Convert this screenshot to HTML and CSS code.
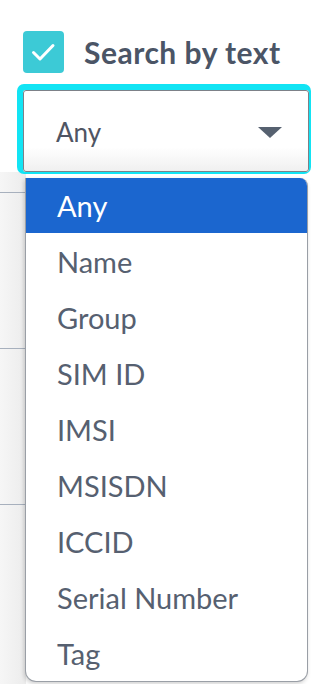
FILE: index.html
```html
<!DOCTYPE html>
<html lang="en">
<head>
    <meta charset="UTF-8">
    <meta name="viewport" content="width=device-width, initial-scale=1.0">
    <title>Search by text</title>
    <link rel="stylesheet" href="styles.css">
</head>
<body>
    <div class="filter">
        <label class="filter-head">
            <span class="checkbox">
                <svg viewBox="0 0 41 42" width="41" height="42"><path d="M10.5 21.5l6.5 6.5L30 14.5" fill="none" stroke="#fff" stroke-width="3" stroke-linecap="round" stroke-linejoin="round"/></svg>
            </span>
            <span class="filter-title">Search by text</span>
        </label>

        <div class="field">
            <div class="select">
                <span class="select-value">Any</span>
                <span class="caret"></span>
            </div>
            <ul class="menu">
                <li class="active">Any</li>
                <li>Name</li>
                <li>Group</li>
                <li>SIM ID</li>
                <li>IMSI</li>
                <li>MSISDN</li>
                <li>ICCID</li>
                <li>Serial Number</li>
                <li>Tag</li>
            </ul>
        </div>
    </div>

    <div class="table">
        <div class="row first"></div>
        <div class="row"></div>
        <div class="row"></div>
        <div class="row last"></div>
    </div>
</body>
</html>
```

FILE: styles.css
```css
body {
    font-family: "Lato", "Open Sans", sans-serif;
    background-color: #ffffff;
    margin: 0;
    padding: 0;
    min-height: 684px;
    color: #4a5263;
}

.filter {
    padding: 31px 12px 0 17px;
}

.filter-head {
    display: flex;
    align-items: center;
    gap: 20px;
    margin-left: 6px;
    height: 42px;
}

.checkbox {
    width: 41px;
    height: 42px;
    border-radius: 4px;
    background-color: #3ccad6;
    display: flex;
}

.filter-title {
    font-size: 30px;
    font-weight: 700;
    color: #4b5566;
    letter-spacing: 0.5px;
}

.field {
    position: relative;
    margin-top: 17px;
}

.select {
    display: flex;
    align-items: center;
    justify-content: space-between;
    height: 78px;
    margin: 6px 0 0 6px;
    padding: 2px 26px 0 32px;
    border: 1px solid #7d8188;
    border-radius: 3px;
    background: linear-gradient(#ffffff 70%, #f0f0f0);
    box-shadow: -2px -2px 0 4px #12e4f4;
    font-size: 26px;
}

.select-value {
    color: #4f5563;
}

.caret {
    width: 0;
    height: 0;
    border-left: 12px solid transparent;
    border-right: 12px solid transparent;
    border-top: 11px solid #566170;
}

.menu {
    position: absolute;
    top: 88px;
    left: 8px;
    right: 1px;
    margin: 0;
    padding: 0;
    list-style: none;
    background: #ffffff;
    border: 1px solid #9a9fa6;
    border-top: none;
    border-radius: 0 8px 11px 11px;
    overflow: hidden;
    box-shadow: -1px 2px 4px rgba(0,0,0,0.18);
}

.menu li {
    height: 56px;
    display: flex;
    align-items: center;
    padding-left: 31px;
    font-size: 29px;
    color: #566070;
}

.menu li.active {
    height: 55px;
    background-color: #1b66cf;
    color: #ffffff;
}

.table {
    width: 26px;
    background: linear-gradient(90deg, #f6f6f6, #ececec);
}

.row {
    height: 155px;
    border-bottom: 1px solid #a7b0bd;
}

.row.first {
    height: 20px;
}

.row.last {
    height: 200px;
    border-bottom: none;
}
```
